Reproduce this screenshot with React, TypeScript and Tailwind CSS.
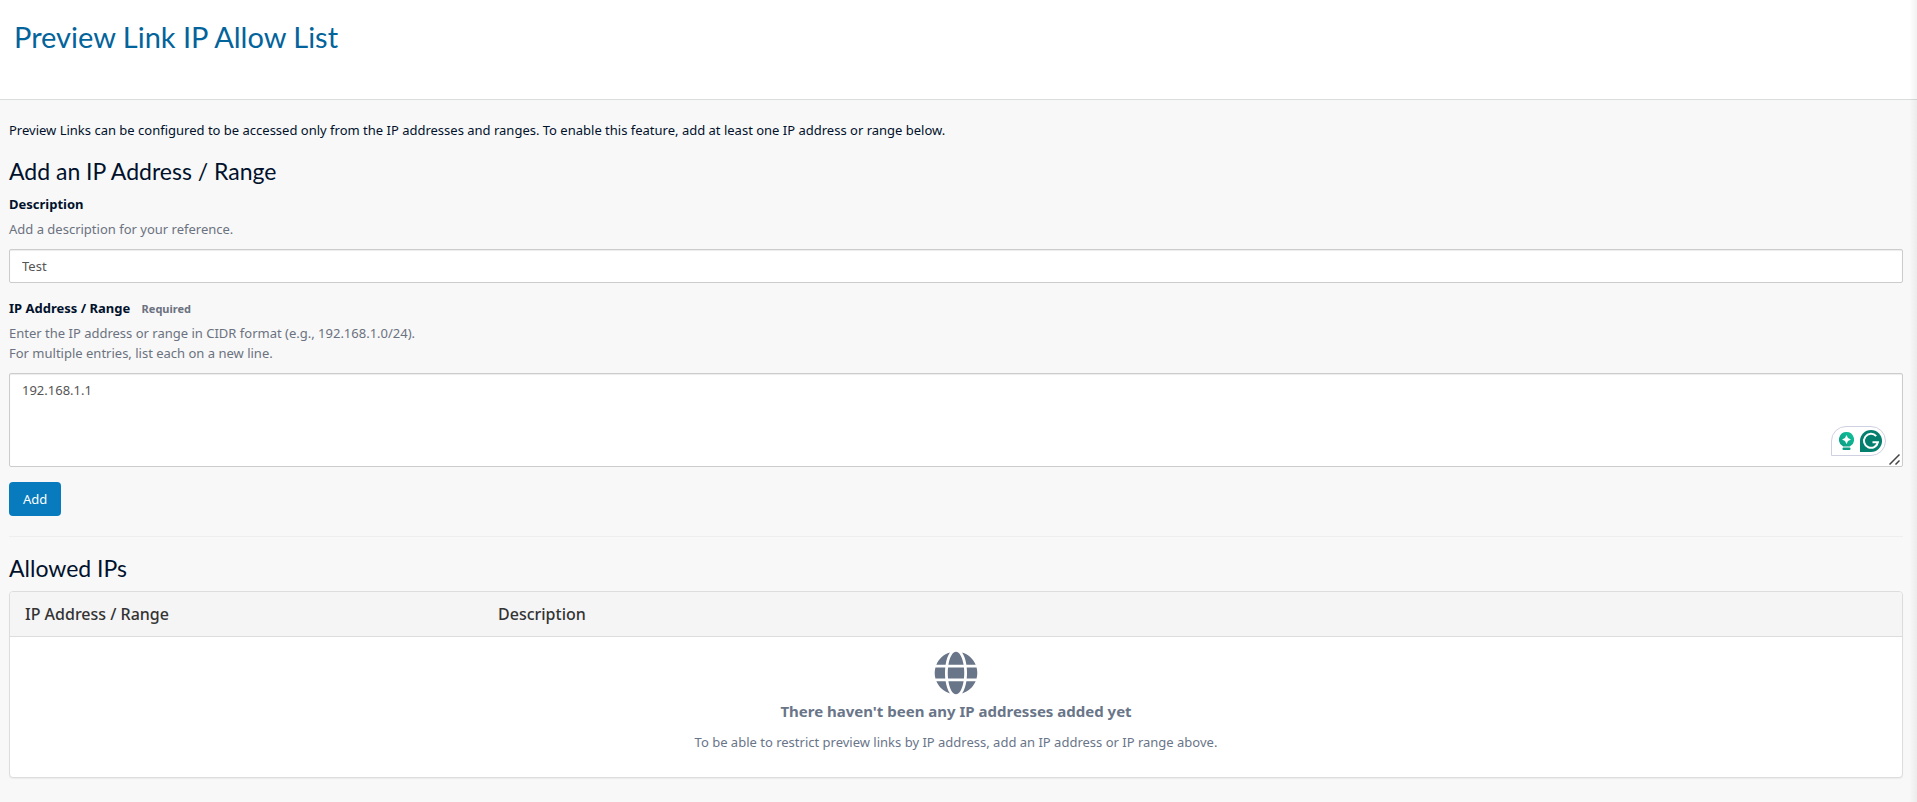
import { FaGlobe } from "react-icons/fa";

const inputClass =
  "block w-full rounded-xs border border-[#ccc] bg-white px-3 text-[13px] leading-5 text-[#555] shadow-[inset_0_1px_1px_rgba(0,0,0,0.075)] outline-none";

function WritingAssistant() {
  return (
    <div className="absolute right-[17px] bottom-[11px] flex h-[30px] w-[55px] items-center justify-end gap-1.5 rounded-[15px] rounded-bl-none border border-[#cfd1e3] bg-white pr-[3px]">
      <svg className="h-[18px] w-[15px]" viewBox="0 0 15 18" aria-hidden="true">
        <defs>
          <linearGradient id="bulb" x1="0" y1="1" x2="1" y2="0">
            <stop offset="0" stopColor="#0b9a83" />
            <stop offset="1" stopColor="#12c39a" />
          </linearGradient>
        </defs>
        <path d="M7.500 0a7.500 7.500 0 0 0-4.200 13.700c.5.300.8.500.8.800h6.800c0-.3.300-.5.800-.8A7.500 7.500 0 0 0 7.500 0z" fill="url(#bulb)" />
        <path d="M7.500 3l1.500 3 3 1.500-3 1.500-1.500 3-1.500-3-3-1.500 3-1.500z" fill="#fff" />
        <rect x="3.500" y="15.500" width="8" height="2.500" rx="1" fill="#0b9a83" />
      </svg>
      <svg className="size-[22px]" viewBox="0 0 22 22" aria-hidden="true">
        <path d="M11 0a11 11 0 1 1 0 22H0V11A11 11 0 0 1 11 0z" fill="#047e6d" />
        <path d="M16.200 6.100A7 7 0 1 0 17.900 12.200H12.500" fill="none" stroke="#fff" strokeWidth="2" />
      </svg>
    </div>
  );
}

export default function App() {
  return (
    <div className="relative min-h-screen bg-[#f8f8f8] font-['Noto_Sans',sans-serif] text-[13px] leading-5 text-[#00112c]">
      <header className="h-[100px] border-b border-[#d9dcdb] bg-white px-3.5 pt-[19px]">
        <h1 className="font-[Lato,sans-serif] text-[29px] leading-9 text-[#03639b]">Preview Link IP Allow List</h1>
      </header>

      <main className="pt-5 pr-3.5 pl-[9px]">
        <p>
          Preview Links can be configured to be accessed only from the IP addresses and ranges. To enable this feature,
          add at least one IP address or range below.
        </p>

        <form onSubmit={(e) => e.preventDefault()}>
          <h2 className="mt-[19px] font-[Lato,sans-serif] text-[23px] leading-6">Add an IP Address / Range</h2>

          <label htmlFor="description" className="mt-[11px] block font-bold">
            Description
          </label>
          <p id="description-help" className="mt-[5px] text-[#6b7280]">
            Add a description for your reference.
          </p>
          <input
            id="description"
            type="text"
            defaultValue="Test"
            aria-describedby="description-help"
            className={`${inputClass} mt-[10px] h-[34px]`}
          />

          <label htmlFor="ip-range" className="mt-[15px] block font-bold">
            IP Address / Range <span className="ml-2 text-[11px] leading-none text-[#6b7280]">Required</span>
          </label>
          <p id="ip-range-help" className="mt-[5px] text-[#6b7280]">
            Enter the IP address or range in CIDR format (e.g., 192.168.1.0/24).
            <br />
            For multiple entries, list each on a new line.
          </p>
          <div className="relative mt-[10px]">
            <textarea
              id="ip-range"
              rows={4}
              defaultValue="192.168.1.1"
              aria-describedby="ip-range-help"
              className={`${inputClass} h-[94px] resize-none py-1.5`}
            />
            <WritingAssistant />
            {/* Resize grip */}
            <svg className="pointer-events-none absolute right-[3px] bottom-[2px] size-[11px]" viewBox="0 0 11 11" aria-hidden="true">
              <path d="M0.500 10.500l10-10M6.500 10.500l4-4" stroke="#444" strokeWidth="1.500" />
            </svg>
          </div>

          <button type="submit" className="mt-[15px] block h-[34px] rounded-sm bg-[#077bbd] px-3.5 text-white">
            Add
          </button>
        </form>

        <hr className="mt-5 border-[#eee]" />

        <h2 className="mt-[19px] font-[Lato,sans-serif] text-[23px] leading-6">Allowed IPs</h2>

        <div className="mt-[11px] overflow-hidden rounded border border-[#ddd] bg-white shadow-[0_1px_1px_rgba(0,0,0,0.05)]">
          <table className="w-full table-fixed text-left">
            <thead>
              <tr className="h-11 border-b border-[#ddd] bg-[#f5f5f5] text-base text-[#333]">
                <th className="w-1/4 px-[15px] font-medium">IP Address / Range</th>
                <th className="px-[15px] font-medium">Description</th>
              </tr>
            </thead>
            <tbody>
              <tr>
                <td colSpan={2} className="px-4 pt-3.5 pb-[25px] text-center text-[#697588]">
                  <FaGlobe className="mx-auto size-11" />
                  <h3 className="mt-1.5 text-[15px] font-bold">There haven't been any IP addresses added yet</h3>
                  <p className="mt-[11px]">
                    To be able to restrict preview links by IP address, add an IP address or IP range above.
                  </p>
                </td>
              </tr>
            </tbody>
          </table>
        </div>
      </main>

      {/* Edge shading along the right side */}
      <div className="pointer-events-none absolute inset-y-0 right-0 w-2 bg-linear-to-r from-transparent to-black/5" />
    </div>
  );
}
